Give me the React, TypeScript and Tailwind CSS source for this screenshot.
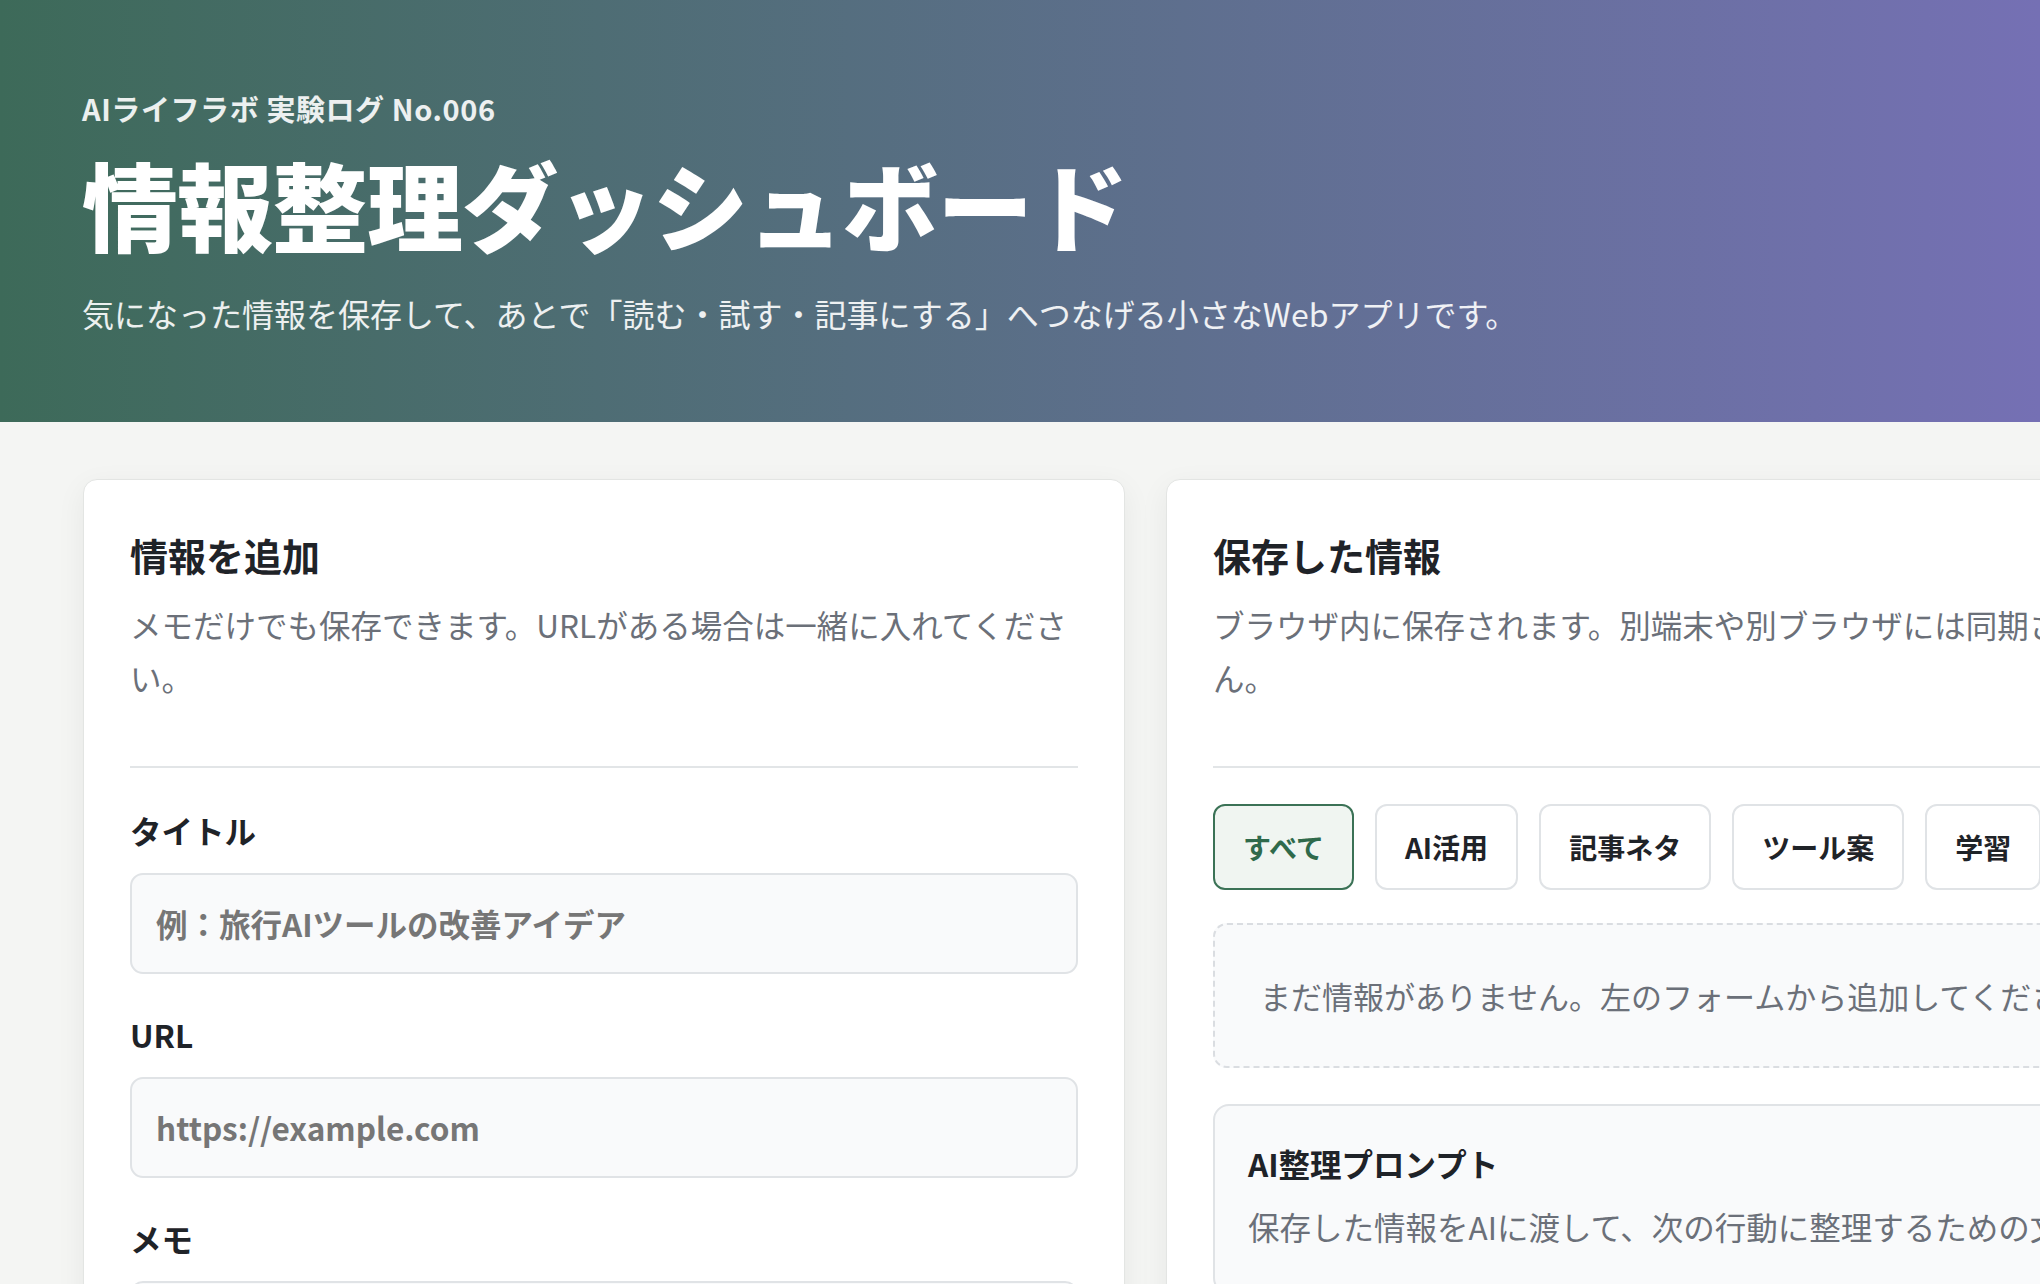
const FILTERS = ['すべて', 'AI活用', '記事ネタ', 'ツール案', '学習']

function Field({ label, children }: { label: string; children: React.ReactNode }) {
  return (
    <label className="block">
      <span className="block text-[31.5px] leading-[44px] font-bold text-[#1f2328]">{label}</span>
      <div className="mt-[21px]">{children}</div>
    </label>
  )
}

const inputClass =
  'block w-full rounded-[13px] border-2 border-[#e0e3e6] bg-[#f9fafb] px-[24px] py-[26px] text-[31.5px] leading-[45px] font-bold text-[#1f2328] placeholder:text-[#767676] outline-none'

export default function App() {
  return (
    <div className="h-screen overflow-hidden bg-[#f4f5f3] font-['Noto_Sans_CJK_JP','Noto_Sans',sans-serif] text-[#1f2328]">
      <header className="bg-linear-to-r from-[#3d6a59] to-[#7570b4] px-[82px] pt-[87px] pb-[83px] text-white">
        <p className="text-[29px] leading-[42px] font-bold tracking-[0.02em] text-white/90">
          AIライフラボ 実験ログ No.006
        </p>
        <h1 className="mt-[16px] text-[96px] leading-[115px] font-black tracking-[-0.01em]">
          情報整理ダッシュボード
        </h1>
        <p className="mt-[27px] text-[32px] leading-[52px] text-white/90">
          気になった情報を保存して、あとで「読む・試す・記事にする」へつなげる小さなWebアプリです。
        </p>
      </header>

      <main className="grid grid-cols-[1042px_1064px] gap-[41px] px-[83px] pt-[57px]">
        {/* Input form */}
        <section className="rounded-[14px] border border-[#e3e5e3] bg-white p-[46px] shadow-[0_8px_30px_rgba(30,40,35,0.06)]">
          <h2 className="text-[38px] leading-[57px] font-bold">情報を追加</h2>
          <p className="mt-[15px] text-[31.5px] leading-[53px] text-[#6b7079]">
            メモだけでも保存できます。URLがある場合は一緒に入れてください。
          </p>
          <hr className="mt-[62px] border-t-2 border-[#e2e5e7]" />

          <div className="mt-[40px] flex flex-col gap-[38px]">
            <Field label="タイトル">
              <input className={inputClass} placeholder="例：旅行AIツールの改善アイデア" />
            </Field>
            <Field label="URL">
              <input className={inputClass} placeholder="https://example.com" />
            </Field>
            <Field label="メモ">
              <textarea className={inputClass} rows={4} placeholder="気になった理由や、試したいことをメモ" />
            </Field>
          </div>
        </section>

        {/* Saved items */}
        <section className="rounded-[14px] border border-[#e3e5e3] bg-white p-[46px] shadow-[0_8px_30px_rgba(30,40,35,0.06)]">
          <h2 className="text-[38px] leading-[57px] font-bold">保存した情報</h2>
          <p className="mt-[15px] text-[31.5px] leading-[53px] text-[#6b7079]">
            ブラウザ内に保存されます。別端末や別ブラウザには同期されません。
          </p>
          <hr className="mt-[62px] border-t-2 border-[#e2e5e7]" />

          <div className="mt-[36px] flex flex-wrap gap-[21px]">
            {FILTERS.map((f, i) => (
              <button
                key={f}
                className={
                  i === 0
                    ? 'rounded-[12px] border-2 border-[#3b7256] bg-[#f0f5f1] px-[28px] py-[20px] text-[28px] leading-[42px] font-bold text-[#2f6a4b]'
                    : 'rounded-[12px] border-2 border-[#e0e3e6] bg-white px-[28px] py-[20px] text-[28px] leading-[42px] font-bold text-[#1f2328]'
                }
              >
                {f}
              </button>
            ))}
          </div>

          <div className="mt-[33px] rounded-[14px] border-2 border-dashed border-[#dadde1] bg-[#f9fafb] px-[45px] py-[44px] text-[31px] leading-[53px] text-[#6b7079]">
            まだ情報がありません。左のフォームから追加してください。
          </div>

          <div className="mt-[36px] rounded-[16px] border-2 border-[#e0e3e6] bg-[#f9fafb] px-[33px] pt-[34px] pb-[40px]">
            <h3 className="text-[31.5px] leading-[46px] font-bold">AI整理プロンプト</h3>
            <p className="mt-[14px] text-[31.5px] leading-[52px] text-[#6b7079]">
              保存した情報をAIに渡して、次の行動に整理するための文面。
            </p>
          </div>
        </section>
      </main>
    </div>
  )
}
